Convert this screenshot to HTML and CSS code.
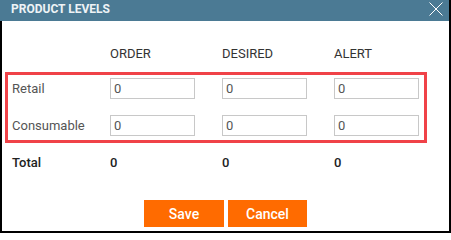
FILE: index.html
```html
<!DOCTYPE html>
<html>
<head>
<meta charset="utf-8">
<link rel="stylesheet" href="styles.css">
</head>
<body>
<div class="dialog">
  <div class="titlebar">
    <span class="title">PRODUCT LEVELS</span>
    <svg class="close" width="14" height="14" viewBox="0 0 14 14"><path d="M0.5 0.5 L13.5 13.5 M13.5 0.5 L0.5 13.5" stroke="#fff" stroke-width="1" fill="none"/></svg>
  </div>
  <div class="content">
    <div class="row head">
      <span></span><span>ORDER</span><span>DESIRED</span><span>ALERT</span>
    </div>
    <div class="highlight">
      <div class="row item">
        <span class="label">Retail</span>
        <input class="field" type="text" value="0">
        <input class="field" type="text" value="0">
        <input class="field" type="text" value="0">
      </div>
      <div class="row item">
        <span class="label">Consumable</span>
        <input class="field" type="text" value="0">
        <input class="field" type="text" value="0">
        <input class="field" type="text" value="0">
      </div>
    </div>
    <div class="row total">
      <span>Total</span><span>0</span><span>0</span><span>0</span>
    </div>
    <div class="actions">
      <button class="btn">Save</button>
      <button class="btn">Cancel</button>
    </div>
  </div>
</div>
</body>
</html>
```

FILE: styles.css
```css
html, body {
  margin: 0;
  padding: 0;
  background: #fff;
}
body {
  font-family: Roboto, "Liberation Sans", Arial, sans-serif;
}
.dialog {
  width: 451px;
  height: 233px;
  box-sizing: border-box;
  border: 2px solid #000;
  border-top: 0;
  background: #fff;
  display: flex;
  flex-direction: column;
}
.titlebar {
  margin-left: -2px;
  height: 21px;
  background: #4b7a94;
  display: flex;
  align-items: center;
  justify-content: space-between;
  padding: 0 6px 0 11px;
}
.title {
  color: #eef3f6;
  font-weight: 700;
  font-size: 12px;
  line-height: 14px;
  padding-bottom: 4px;
}
.close {
  align-self: flex-start;
  margin-top: 2px;
}
.content {
  padding: 0 0 0 3px;
  display: flex;
  flex-direction: column;
}
.row {
  display: grid;
  grid-template-columns: 98px 112px 112px 112px;
  align-items: center;
}
.head {
  padding-left: 7px;
  margin-top: 25px;
  height: 15px;
  font-size: 13px;
  line-height: 15px;
  color: #333;
}
.highlight {
  margin-top: 11px;
  width: 422px;
  box-sizing: border-box;
  border: 3px solid #f04248;
  border-left-width: 3px;
  padding: 3px 0 4px 4px;
  display: flex;
  flex-direction: column;
  gap: 16px;
}
.item {
  height: 21px;
}
.label {
  font-size: 13px;
  color: #555;
}
.field {
  width: 85px;
  height: 21px;
  box-sizing: border-box;
  border: 1px solid #c8c8c8;
  padding: 0 3px;
  font-family: Roboto, "Liberation Sans", Arial, sans-serif;
  font-size: 13px;
  color: #555;
  margin: 0;
  outline: none;
}
.total {
  padding-left: 7px;
  margin-top: 11px;
  height: 16px;
  font-size: 13px;
  font-weight: 500;
  color: #222;
}
.actions {
  margin-top: 30px;
  display: flex;
  justify-content: center;
  gap: 4px;
  padding-left: 0;
  margin-left: -3px;
}
.btn {
  border: 0;
  margin: 0;
  height: 27px;
  background: #ff6b00;
  color: #fff;
  font-family: Roboto, "Liberation Sans", Arial, sans-serif;
  font-size: 14px;
  font-weight: 500;
  padding: 0;
}
.btn:first-child {
  width: 80px;
}
.btn:last-child {
  width: 79px;
}
```
